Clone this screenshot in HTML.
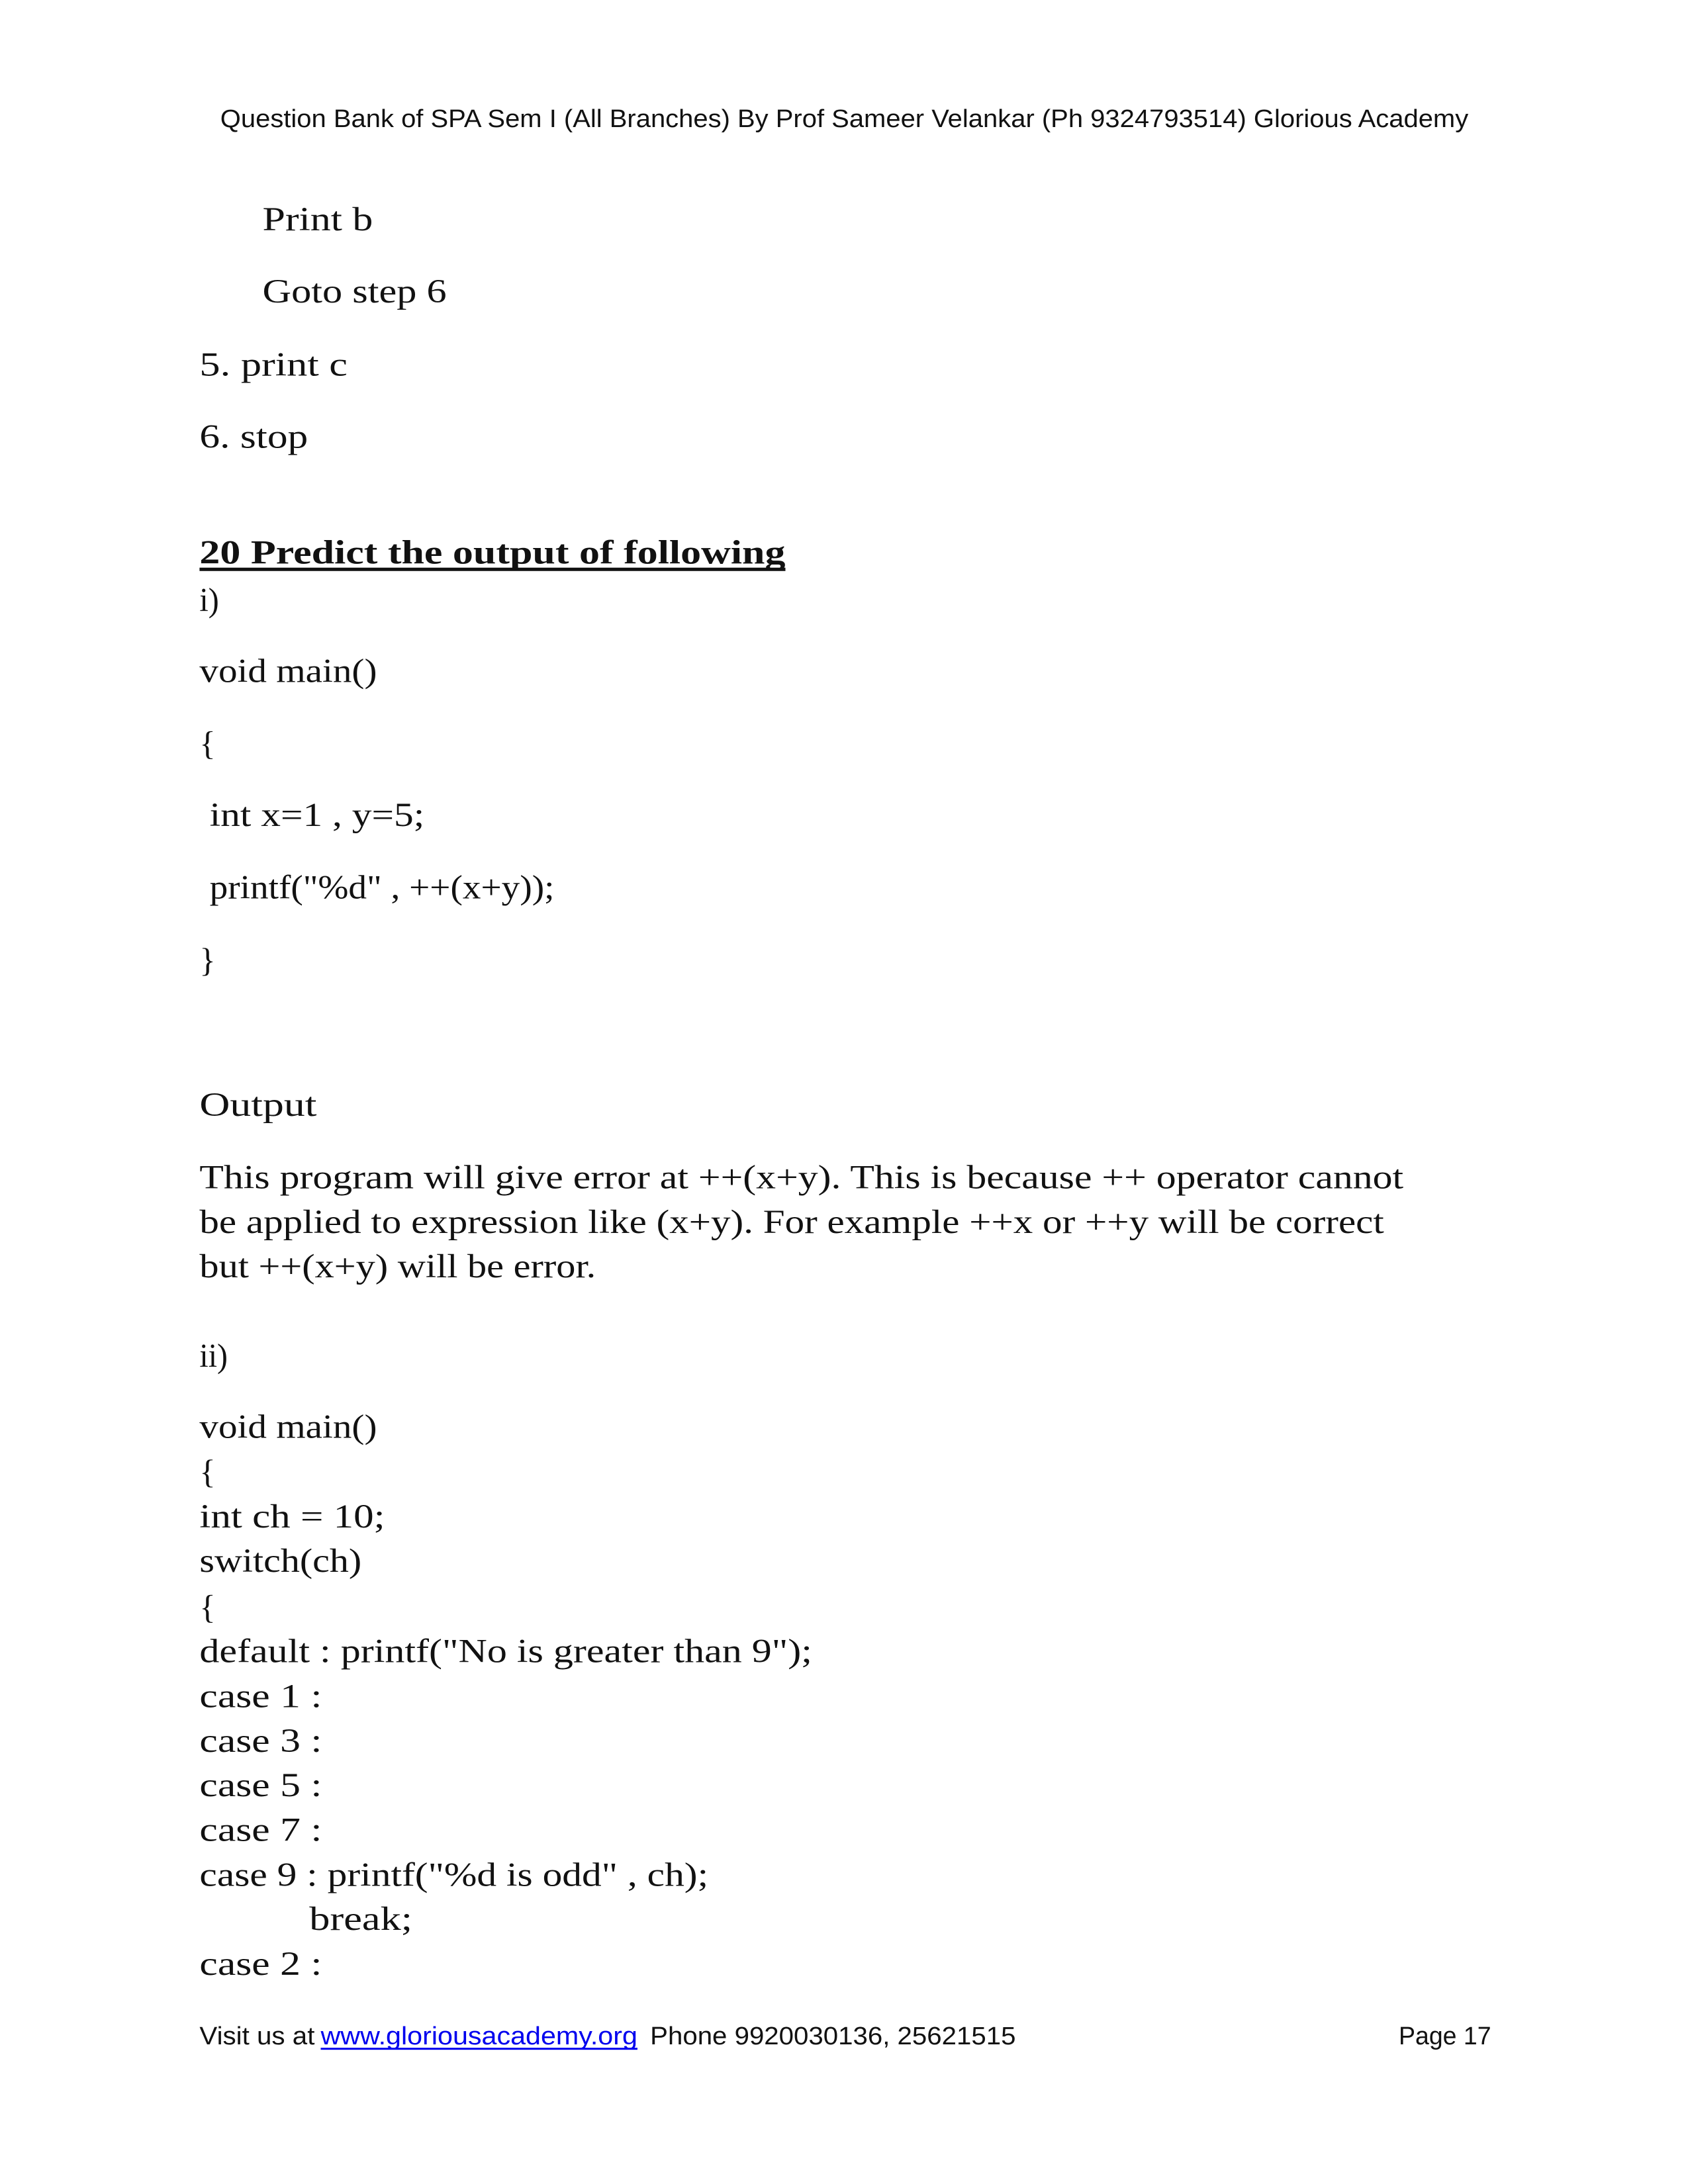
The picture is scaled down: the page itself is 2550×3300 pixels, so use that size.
<!DOCTYPE html>
<html><head><meta charset="utf-8"><style>
html,body{margin:0;padding:0;background:#fff;}
svg{display:block;}
.b{font-family:"Liberation Serif",serif;font-size:50px;fill:#111;}
.h{font-family:"Liberation Sans",sans-serif;font-size:38px;fill:#111;}
</style></head><body>
<svg width="2550" height="3300" viewBox="0 0 2550 3300" xmlns="http://www.w3.org/2000/svg">
<rect width="2550" height="3300" fill="#fff"/>
<g transform="translate(0,2) scale(1.0115)">
<text class="h" x="329" y="188" textLength="1864" lengthAdjust="spacingAndGlyphs">Question Bank of SPA Sem I (All Branches) By Prof Sameer Velankar  (Ph 9324793514)  Glorious Academy</text>

<text class="b" x="392" y="342" textLength="165" lengthAdjust="spacingAndGlyphs">Print b</text>
<text class="b" x="392" y="450" textLength="275" lengthAdjust="spacingAndGlyphs">Goto step 6</text>
<text class="b" x="298" y="559" textLength="221" lengthAdjust="spacingAndGlyphs">5. print c</text>
<text class="b" x="298" y="667" textLength="162" lengthAdjust="spacingAndGlyphs">6. stop</text>

<text class="b" x="298" y="840" textLength="875" lengthAdjust="spacingAndGlyphs" font-weight="bold">20 Predict the output of following</text>
<rect x="298" y="846" width="875" height="5" fill="#111"/>
<text class="b" x="298" y="911" textLength="29" lengthAdjust="spacingAndGlyphs">i)</text>
<text class="b" x="298" y="1017" textLength="265" lengthAdjust="spacingAndGlyphs">void main()</text>
<text class="b" x="298" y="1125">{</text>
<text class="b" x="313" y="1232" textLength="321" lengthAdjust="spacingAndGlyphs">int x=1 , y=5;</text>
<text class="b" x="313" y="1340" textLength="515" lengthAdjust="spacingAndGlyphs">printf("%d" , ++(x+y));</text>
<text class="b" x="298" y="1449">}</text>

<text class="b" x="298" y="1665" textLength="175" lengthAdjust="spacingAndGlyphs">Output</text>
<text class="b" x="298" y="1773" textLength="1798" lengthAdjust="spacingAndGlyphs">This program will give error at ++(x+y). This is because ++ operator cannot</text>
<text class="b" x="298" y="1840" textLength="1769" lengthAdjust="spacingAndGlyphs">be applied to expression like (x+y). For example ++x or ++y will be correct</text>
<text class="b" x="298" y="1906" textLength="592" lengthAdjust="spacingAndGlyphs">but ++(x+y) will be error.</text>

<text class="b" x="298" y="2040" textLength="42" lengthAdjust="spacingAndGlyphs">ii)</text>
<text class="b" x="298" y="2146" textLength="265" lengthAdjust="spacingAndGlyphs">void main()</text>
<text class="b" x="298" y="2213">{</text>
<text class="b" x="298" y="2280" textLength="277" lengthAdjust="spacingAndGlyphs">int ch = 10;</text>
<text class="b" x="298" y="2346" textLength="242" lengthAdjust="spacingAndGlyphs">switch(ch)</text>
<text class="b" x="298" y="2415">{</text>
<text class="b" x="298" y="2481" textLength="915" lengthAdjust="spacingAndGlyphs">default : printf("No is greater than 9");</text>
<text class="b" x="298" y="2548" textLength="183" lengthAdjust="spacingAndGlyphs">case 1 :</text>
<text class="b" x="298" y="2615" textLength="183" lengthAdjust="spacingAndGlyphs">case 3 :</text>
<text class="b" x="298" y="2681" textLength="183" lengthAdjust="spacingAndGlyphs">case 5 :</text>
<text class="b" x="298" y="2748" textLength="183" lengthAdjust="spacingAndGlyphs">case 7 :</text>
<text class="b" x="298" y="2815" textLength="760" lengthAdjust="spacingAndGlyphs">case 9 : printf("%d is odd" , ch);</text>
<text class="b" x="462" y="2881" textLength="154" lengthAdjust="spacingAndGlyphs">break;</text>
<text class="b" x="298" y="2948" textLength="183" lengthAdjust="spacingAndGlyphs">case 2 :</text>

<text class="h" x="298" y="3052" textLength="172" lengthAdjust="spacingAndGlyphs">Visit us at</text>
<text class="h" x="479" y="3052" textLength="473" lengthAdjust="spacingAndGlyphs" style="fill:#0000ee">www.gloriousacademy.org</text>
<rect x="479" y="3057" width="473" height="3" fill="#0000ee"/>
<text class="h" x="971" y="3052" textLength="546" lengthAdjust="spacingAndGlyphs">Phone 9920030136, 25621515</text>
<text class="h" x="2089" y="3052" textLength="138" lengthAdjust="spacingAndGlyphs">Page 17</text>
</g>
</svg>
</body></html>
